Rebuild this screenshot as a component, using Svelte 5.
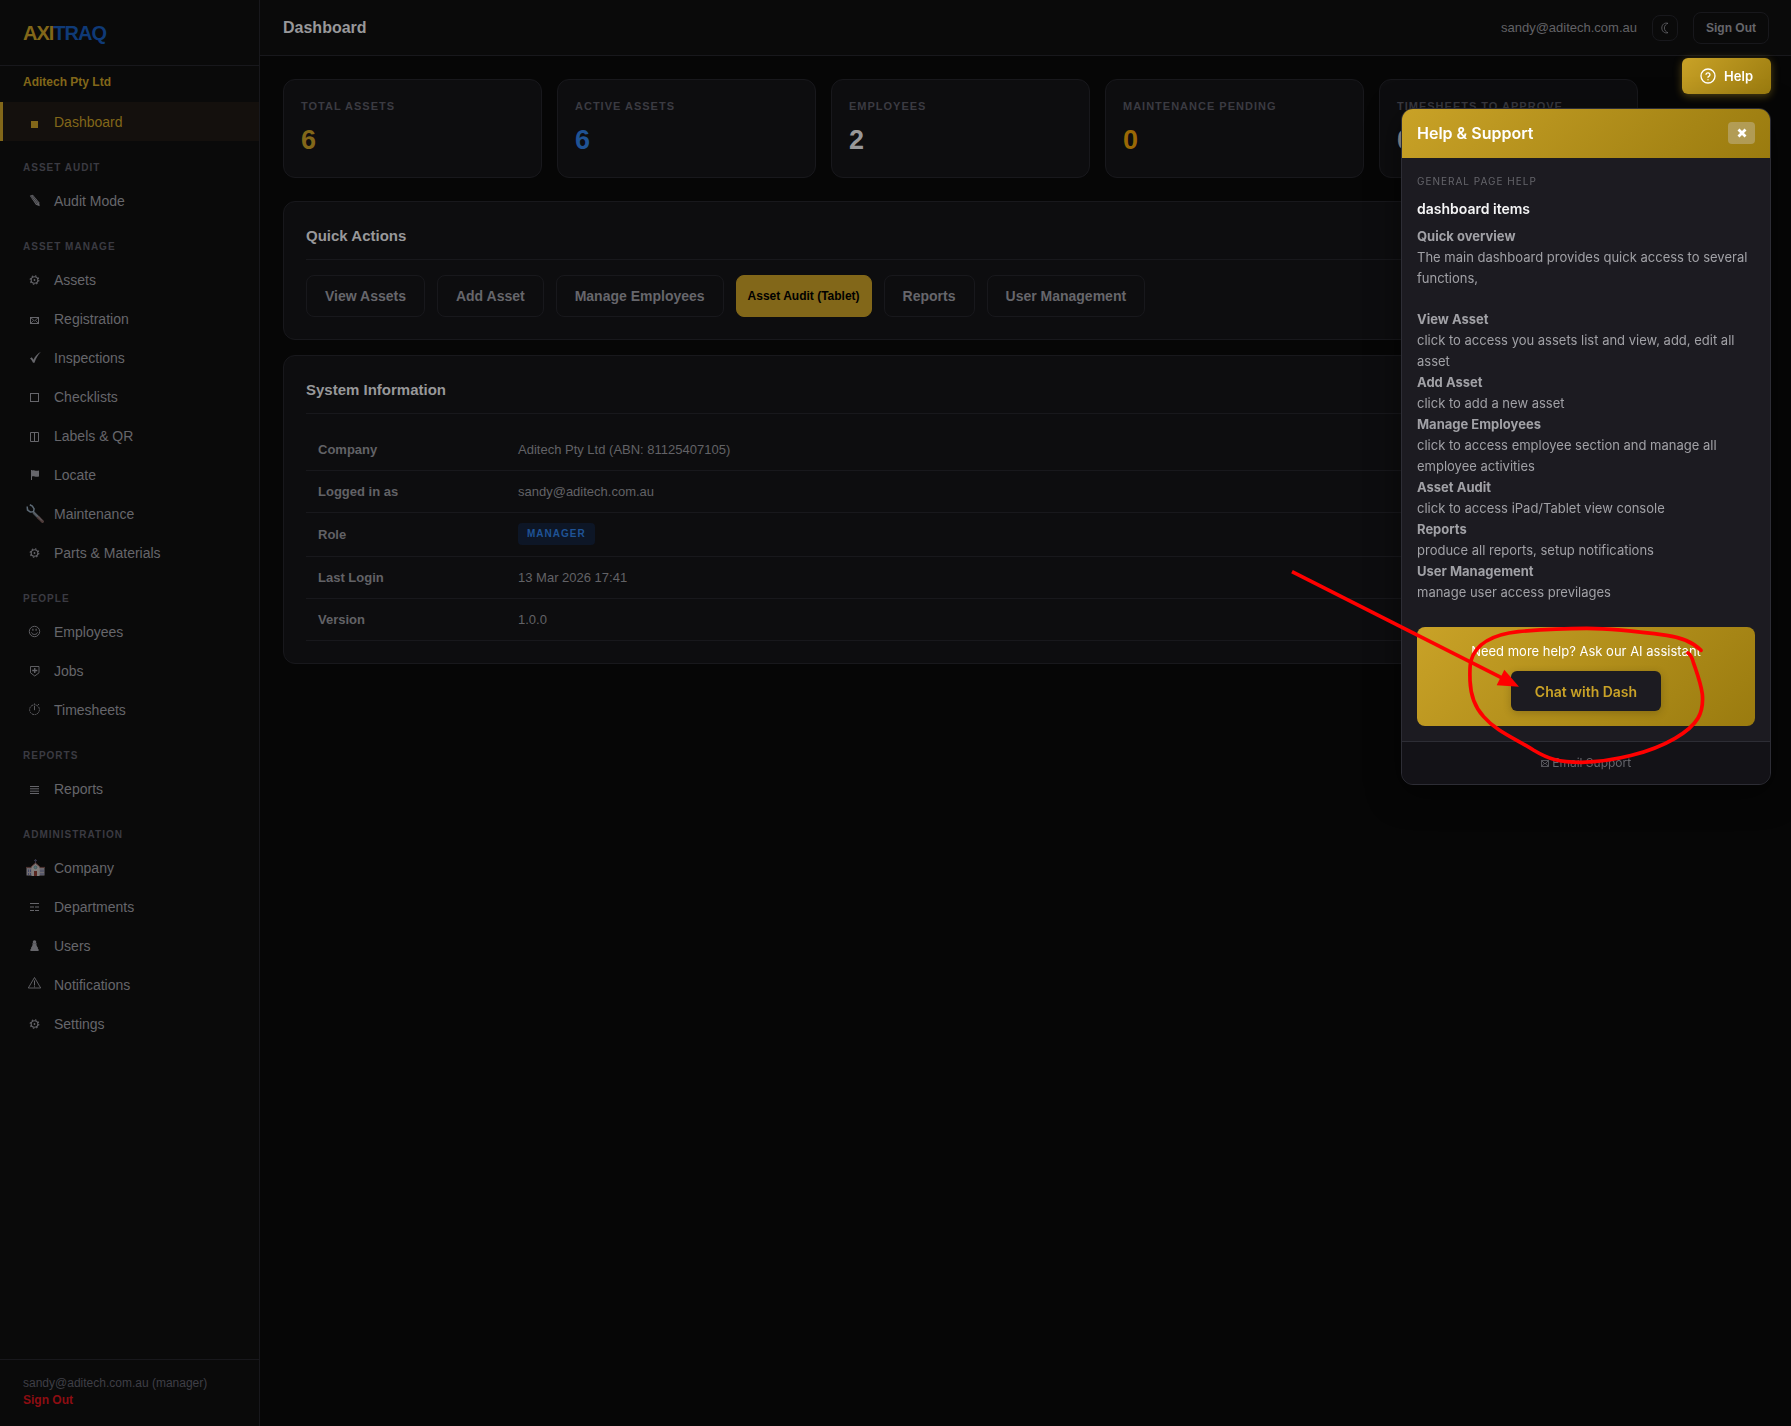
<script lang="ts">
  interface NavItem {
    label: string;
    icon: string;
    active?: boolean;
  }

  interface NavSection {
    title?: string;
    items: NavItem[];
  }

  const sections: NavSection[] = [
    { items: [{ label: "Dashboard", icon: "square", active: true }] },
    { title: "Asset Audit", items: [{ label: "Audit Mode", icon: "pencil" }] },
    {
      title: "Asset Manage",
      items: [
        { label: "Assets", icon: "gear" },
        { label: "Registration", icon: "mail" },
        { label: "Inspections", icon: "check" },
        { label: "Checklists", icon: "box" },
        { label: "Labels & QR", icon: "split" },
        { label: "Locate", icon: "flag" },
        { label: "Maintenance", icon: "wrench" },
        { label: "Parts & Materials", icon: "gear" },
      ],
    },
    {
      title: "People",
      items: [
        { label: "Employees", icon: "smile" },
        { label: "Jobs", icon: "shield" },
        { label: "Timesheets", icon: "clock" },
      ],
    },
    { title: "Reports", items: [{ label: "Reports", icon: "lines" }] },
    {
      title: "Administration",
      items: [
        { label: "Company", icon: "school" },
        { label: "Departments", icon: "trigram" },
        { label: "Users", icon: "pawn" },
        { label: "Notifications", icon: "warning" },
        { label: "Settings", icon: "gear" },
      ],
    },
  ];

  const stats = [
    { label: "Total Assets", value: 6, tone: "gold" },
    { label: "Active Assets", value: 6, tone: "blue" },
    { label: "Employees", value: 2, tone: "plain" },
    { label: "Maintenance Pending", value: 0, tone: "amber" },
    { label: "Timesheets to Approve", value: 0, tone: "plain" },
  ];

  const actions = [
    { label: "View Assets" },
    { label: "Add Asset" },
    { label: "Manage Employees" },
    { label: "Asset Audit (Tablet)", primary: true },
    { label: "Reports" },
    { label: "User Management" },
  ];

  const info = [
    { label: "Company", value: "Aditech Pty Ltd (ABN: 81125407105)" },
    { label: "Logged in as", value: "sandy@aditech.com.au" },
    { label: "Role", value: "Manager", badge: true },
    { label: "Last Login", value: "13 Mar 2026 17:41" },
    { label: "Version", value: "1.0.0" },
  ];

  const topics = [
    { title: "View Asset", text: "click to access you assets list and view, add, edit all asset" },
    { title: "Add Asset", text: "click to add a new asset" },
    { title: "Manage Employees", text: "click to access employee section and manage all employee activities" },
    { title: "Asset Audit", text: "click to access iPad/Tablet view console" },
    { title: "Reports", text: "produce all reports, setup notifications" },
    { title: "User Management", text: "manage user access previlages" },
  ];

  let helpOpen = $state(true);
</script>

{#snippet icon(name: string)}
  <svg class="icon" viewBox="0 0 20 19" width="20" height="19" fill="none" stroke="currentColor" aria-hidden="true">
    {#if name === "square"}
      <rect x="6" y="9" width="7" height="7" fill="currentColor" stroke="none" />
    {:else if name === "pencil"}
      <path d="M4.8 4.8l3-1 6.3 7.4.6 4-3.800-1.400z" fill="currentColor" stroke="none" />
      <path d="M6 5.200l6.200 8M7.400 4.600l6 7.600" stroke="#0a0a0a" stroke-width=".5" />
    {:else if name === "gear"}
      <circle cx="9.5" cy="10" r="3.3" stroke-width="1.1" />
      <circle cx="9.5" cy="10" r="4.300" stroke-width="1.1" stroke-dasharray="1.500 1.877" />
      <circle cx="9.5" cy="10" r=".9" fill="currentColor" stroke="none" />
    {:else if name === "mail"}
      <rect x="5.5" y="8.500" width="8" height="6" />
      <path d="M5.5 8.500l4 3.500 4-3.500M5.5 14.500l3-3M13.5 14.500l-3-3" stroke-width=".8" />
    {:else if name === "check"}
      <path d="M5 10.500l1.800-1.200 1.700 2.500C10 8.500 12.500 5.500 16 3.800c-3 3-5 6.500-6.500 11H8C7.200 12.800 6.200 11.200 5 10.500z" fill="currentColor" stroke="none" />
    {:else if name === "box"}
      <rect x="5.5" y="6.500" width="8" height="8" />
    {:else if name === "split"}
      <path d="M5.5 6.500h8v9h-8zM9.5 6.500v9" />
    {:else if name === "flag"}
      <path d="M6.5 5v10" />
      <path d="M7 5.500c2-1 3 1 7 0v6c-4 1-5-1-7 0z" fill="currentColor" stroke="none" />
    {:else if name === "wrench"}
      <path d="M8.500 8.500l6 6" stroke="#4c5258" stroke-width="2.600" />
      <path d="M2.200 2.500l.3 3.600 2.800 1.800 3.200-.2.600-2.800L7.300 2 4.800.8M2.200 4l.8 2.500" stroke="#5c6975" stroke-width="1.500" />
      <path d="M13.500 13.500l4 4" stroke="#4d3a38" stroke-width="3" stroke-linecap="round" />
      <path d="M7.500 7l9.500 9.500" stroke="#69727b" stroke-width=".8" />
    {:else if name === "smile"}
      <circle cx="9.500" cy="9.500" r="5.200" stroke-width=".9" />
      <path d="M6.500 10.500c.8 2.600 5.200 2.600 6 0" />
      <path d="M7.900 6.800v2M11.100 6.800v2" stroke-width="1.100" />
    {:else if name === "shield"}
      <path d="M5.500 5.500h8.500v6.300l-4.250 3.200-4.250-3.200z" stroke-width=".9" />
      <path d="M9.750 7v5M7.200 9.500h5.100" stroke-width="1.300" />
    {:else if name === "clock"}
      <circle cx="9.500" cy="9.700" r="4.900" stroke-width=".9" stroke-dasharray="2 .7" />
      <path d="M9.500 6v4.200M9.500 3.500v1M13 5l1-1" stroke-width=".9" />
    {:else if name === "lines"}
      <path d="M5 7.500h9M5 9.800h9M5 12.200h9M5 14.500h9" />
    {:else if name === "school"}
      <path d="M10.500 1v5M9 2.500h3" stroke="#303044" stroke-width="1.200" />
      <path d="M1.500 9.500h18v8h-18z" fill="#716d72" stroke="none" />
      <path d="M1 9.500h19" stroke="#4d3230" stroke-width="1.200" />
      <path d="M6.500 18V8.500l4-3.500 4 3.500V18z" fill="#817d7c" stroke="none" />
      <path d="M6.300 8.700l4.200-3.500 4.200 3.500" stroke="#5a3431" />
      <circle cx="10.500" cy="9.300" r="1.500" fill="#557276" stroke="#394c50" stroke-width=".6" />
      <path d="M9 13h3v5H9z" fill="#592721" stroke="none" />
      <path d="M3.500 11.500v2.500M5.500 11.500v2.500M16 11.500v2.500M18 11.500v2.500M3.500 15v2M5.500 15v2M16 15v2M18 15v2" stroke="#414765" />
    {:else if name === "trigram"}
      <path d="M5 6.500h9M5 10h4M10 10h4M5 13.500h4M10 13.500h4" stroke-width="1.200" />
    {:else if name === "pawn"}
      <circle cx="9.500" cy="6" r="1.800" fill="currentColor" stroke="none" />
      <path d="M7.200 7.300h4.600l-.4 1.500c.3 1.300.8 2 1.500 2.700v1.200l.7.600V15H5.400v-1.700l.7-.6v-1.200c.7-.7 1.200-1.400 1.500-2.700z" fill="currentColor" stroke="none" />
    {:else if name === "warning"}
      <path d="M9.500 2.500l6.200 10.500H3.300z" stroke-width=".9" />
      <path d="M9.500 5.500v5M9.500 11.300v1" />
    {/if}
  </svg>
{/snippet}

<div class="app">
  <aside class="sidebar">
    <div class="logo"><span>AXI</span>TRAQ</div>
    <div class="tenant">Aditech Pty Ltd</div>
    <nav>
      {#each sections as section}
        {#if section.title}
          <div class="nav-title">{section.title}</div>
        {/if}
        {#each section.items as item}
          <a class="nav-item" class:active={item.active} href="#{item.icon}">
            {@render icon(item.icon)}
            <span>{item.label}</span>
          </a>
        {/each}
      {/each}
    </nav>
    <div class="sidebar-footer">
      <div>sandy@aditech.com.au (manager)</div>
      <a href="#logout">Sign Out</a>
    </div>
  </aside>

  <div class="main">
    <header class="topbar">
      <h1>Dashboard</h1>
      <div class="topbar-right">
        <span class="email">sandy@aditech.com.au</span>
        <button class="theme-btn" aria-label="Toggle theme">
          <svg viewBox="0 0 12 14" width="12" height="14" fill="none" stroke="currentColor">
            <path d="M9 2.300C5.300 1.300 2.800 3.700 2.800 7s2.700 5.700 6.200 4.700C6.800 11 5.400 9.200 5.400 7S6.800 3 9 2.300z" stroke-width=".8" />
          </svg>
        </button>
        <button class="signout-btn">Sign Out</button>
      </div>
    </header>

    <main class="content">
      <div class="stats">
        {#each stats as stat}
          <div class="stat">
            <div class="stat-label">{stat.label}</div>
            <div class="stat-value {stat.tone}">{stat.value}</div>
          </div>
        {/each}
      </div>

      <section class="card">
        <h2>Quick Actions</h2>
        <div class="actions">
          {#each actions as action}
            <button class="action" class:primary={action.primary}>{action.label}</button>
          {/each}
        </div>
      </section>

      <section class="card">
        <h2>System Information</h2>
        <table>
          <tbody>
            {#each info as row}
              <tr>
                <th scope="row">{row.label}</th>
                <td>
                  {#if row.badge}
                    <span class="badge">{row.value}</span>
                  {:else}
                    {row.value}
                  {/if}
                </td>
              </tr>
            {/each}
          </tbody>
        </table>
      </section>
    </main>
  </div>
</div>

<div class="help">
  <button class="help-btn" onclick={() => (helpOpen = !helpOpen)}>
    <svg viewBox="0 0 24 24" width="16" height="16" fill="none" stroke="currentColor" stroke-width="2" stroke-linecap="round">
      <circle cx="12" cy="12" r="10.500" />
      <path d="M9 9.300a3.100 3.100 0 0 1 6 1c0 2-3 2.300-3 3.700M12 17.500v.1" />
    </svg>
    Help
  </button>

  {#if helpOpen}
    <div class="popup" role="dialog" aria-label="Help & Support">
      <div class="popup-header">
        <h3>Help &amp; Support</h3>
        <button class="close-btn" aria-label="Close" onclick={() => (helpOpen = false)}>
          <svg viewBox="0 0 10 10" width="10" height="10" stroke="currentColor" stroke-width="2.800">
            <path d="M1.500 1.500l7 7M8.500 1.500l-7 7" />
          </svg>
        </button>
      </div>
      <div class="popup-body">
        <div class="eyebrow">General page help</div>
        <h4>dashboard items</h4>
        <div class="help-text">
          <strong>Quick overview</strong>
          <p class="intro">The main dashboard provides quick access to several functions,</p>
          {#each topics as topic}
            <strong>{topic.title}</strong>
            <p>{topic.text}</p>
          {/each}
        </div>
        <div class="assistant">
          <p>Need more help? Ask our AI assistant</p>
          <button class="chat-btn">Chat with Dash</button>
        </div>
      </div>
      <div class="popup-footer">
        <a href="#email">
          <svg viewBox="0 0 8 7" width="8" height="7" fill="none" stroke="currentColor" stroke-width=".8">
            <path d="M.5.5h7v6h-7zM.5.5L4 4 7.500.5M.5 6.500l2.700-3M7.500 6.500l-2.700-3" />
          </svg>
          Email Support
        </a>
      </div>
    </div>

    <!-- arrow and circle pointing out the chat button -->
    <svg class="marker" viewBox="0 0 1563 780" width="521" height="260" fill="none" stroke="#ff0000" stroke-width="11" aria-hidden="true">
      <path d="M66 68L700 389" />
      <path d="M747 413l-67-4 23-47z" fill="#ff0000" stroke="none" />
      <path
        d="M1293 304C1270 280 1235 265 1190 259C1110 248 1030 238 950 238C880 238 810 242 745 248C670 256 617 285 603 335C598 355 600 375 600 395C602 440 615 475 640 502C680 548 735 568 790 603C835 630 865 640 935 640C1030 638 1140 612 1215 568C1285 528 1302 490 1297 435C1292 400 1280 370 1270 340Q1264 318 1254 312"
        stroke-linecap="round"
      />
    </svg>
  {/if}
</div>

<style>
  :global(body) {
    background: #060606;
    color: #98989a;
    font-family: "Liberation Sans", Helvetica, Arial, sans-serif;
  }

  * {
    box-sizing: border-box;
  }

  h1,
  h2,
  h3,
  h4,
  p {
    margin: 0;
  }

  button {
    font-family: inherit;
    cursor: pointer;
  }

  a {
    text-decoration: none;
  }

  .app {
    display: flex;
    min-height: 100vh;
  }

  /* Sidebar */
  .sidebar {
    width: 260px;
    flex-shrink: 0;
    display: flex;
    flex-direction: column;
    background: #0a0a0a;
    border-right: 1px solid #18181c;
  }

  .logo {
    padding: 21px 23px 20px;
    border-bottom: 1px solid #18181c;
    font-size: 20px;
    line-height: 24px;
    font-weight: 700;
    letter-spacing: -1px;
    color: #0f3a77;
  }

  .logo span {
    color: #826719;
  }

  .tenant {
    padding: 8px 23px 12px;
    font-size: 12px;
    line-height: 16px;
    font-weight: 700;
    color: #826719;
  }

  nav {
    flex: 1;
  }

  .nav-title {
    padding: 20px 23px 6px;
    font-size: 10px;
    line-height: 14px;
    font-weight: 700;
    letter-spacing: 1px;
    text-transform: uppercase;
    color: #3b3b42;
  }

  .nav-item {
    display: flex;
    align-items: center;
    gap: 9px;
    height: 39px;
    padding-left: 22px;
    border-left: 3px solid transparent;
    font-size: 14px;
    color: #66666b;
  }

  .nav-item.active {
    background: #14100d;
    border-left-color: #826719;
    color: #826719;
  }

  .icon {
    flex-shrink: 0;
  }

  .sidebar-footer {
    padding: 15px 23px 17px;
    border-top: 1px solid #18181c;
    font-size: 12px;
    line-height: 17px;
    color: #3f3f46;
  }

  .sidebar-footer a {
    font-weight: 700;
    color: #8d0d12;
  }

  /* Top bar */
  .main {
    flex: 1;
    min-width: 0;
  }

  .topbar {
    display: flex;
    align-items: center;
    justify-content: space-between;
    height: 56px;
    padding: 0 22px 0 23px;
    background: #0a0a0a;
    border-bottom: 1px solid #18181c;
  }

  .topbar h1 {
    font-size: 16px;
    font-weight: 700;
  }

  .topbar-right {
    display: flex;
    align-items: center;
    gap: 15px;
  }

  .email {
    font-size: 13px;
    color: #626266;
  }

  .theme-btn,
  .signout-btn,
  .action {
    background: transparent;
    border: 1px solid #18181c;
    border-radius: 8px;
    color: #66666b;
  }

  .theme-btn {
    display: flex;
    align-items: center;
    justify-content: center;
    width: 26px;
    height: 26px;
    padding: 0;
  }

  .signout-btn {
    height: 32px;
    padding: 0 12px;
    font-size: 12px;
    font-weight: 700;
  }

  /* Content */
  .content {
    display: flex;
    flex-direction: column;
    gap: 15px;
    max-width: 1401px;
    padding: 23px;
  }

  .stats {
    display: grid;
    grid-template-columns: repeat(5, 1fr);
    gap: 15px;
    margin-bottom: 8px;
  }

  .stat,
  .card {
    background: #0d0d0f;
    border: 1px solid #18181c;
    border-radius: 12px;
  }

  .stat {
    height: 99px;
    padding: 18px 17px;
  }

  .stat-label {
    font-size: 11px;
    line-height: 16px;
    font-weight: 700;
    letter-spacing: 1px;
    text-transform: uppercase;
    color: #3b3b42;
  }

  .stat-value {
    margin-top: 8px;
    font-size: 27px;
    line-height: 36px;
    font-weight: 700;
    color: #98989a;
  }

  .stat-value.gold {
    color: #826719;
  }

  .stat-value.blue {
    color: #1f5395;
  }

  .stat-value.amber {
    color: #9a6805;
  }

  .card {
    padding: 22px;
  }

  .card h2 {
    padding: 2px 0 13px;
    margin-bottom: 15px;
    border-bottom: 1px solid #18181c;
    font-size: 15px;
    line-height: 20px;
    font-weight: 700;
  }

  .actions {
    display: flex;
    flex-wrap: wrap;
    gap: 12px;
  }

  .action {
    height: 42px;
    padding: 0 18px;
    font-size: 14px;
    font-weight: 700;
  }

  .action.primary {
    padding: 0 11px;
    background: #826719;
    border-color: #826719;
    font-size: 12px;
    color: #000000;
  }

  table {
    width: 100%;
    border-spacing: 0;
    font-size: 13px;
    line-height: 20px;
    color: #626266;
  }

  th,
  td {
    height: 42px;
    padding: 0 12px;
    border-bottom: 1px solid #18181c;
    text-align: left;
  }

  th {
    width: 200px;
    font-weight: 700;
  }

  .badge {
    display: inline-block;
    margin: 10px 0 11px;
    padding: 0 9px;
    border-radius: 4px;
    background: #0d1626;
    color: #1f5395;
    font-size: 10px;
    line-height: 22px;
    font-weight: 700;
    letter-spacing: 1px;
    text-transform: uppercase;
    vertical-align: middle;
  }

  /* Help popup */
  .help {
    position: fixed;
    top: 58px;
    right: 20px;
    display: flex;
    flex-direction: column;
    align-items: flex-end;
    gap: 14px;
    font-family: Inter, sans-serif;
    font-size: 13px;
  }

  .help-btn {
    display: flex;
    align-items: center;
    gap: 8px;
    height: 36px;
    padding: 0 18px;
    border: none;
    border-radius: 6px;
    background: linear-gradient(135deg, #c9a227, #9a7b0f);
    box-shadow: 0 2px 8px rgba(201, 162, 39, 0.4);
    color: #ffffff;
    font-size: 13px;
    font-weight: 600;
  }

  .popup {
    width: 370px;
    overflow: hidden;
    background: #1c1b21;
    border: 1px solid #2d2d35;
    border-radius: 12px;
    box-shadow: 0 8px 32px rgba(0, 0, 0, 0.5);
  }

  .popup-header {
    display: flex;
    align-items: center;
    justify-content: space-between;
    height: 49px;
    padding: 0 15px 2px;
    background: linear-gradient(135deg, #c9a227, #9a7b0f);
    color: #ffffff;
  }

  .popup-header h3 {
    font-size: 16px;
    font-weight: 600;
  }

  .close-btn {
    display: flex;
    align-items: center;
    justify-content: center;
    width: 27px;
    height: 22px;
    padding: 0;
    border: none;
    border-radius: 4px;
    background: rgba(196, 184, 152, 0.5);
    color: #ffffff;
  }

  .popup-body {
    padding: 15px;
  }

  .eyebrow {
    font-size: 10px;
    line-height: 16px;
    letter-spacing: 1px;
    text-transform: uppercase;
    color: #65656b;
  }

  h4 {
    margin: 10px 0 7px;
    font-size: 14px;
    line-height: 20px;
    font-weight: 600;
    color: #f4f4f5;
  }

  .help-text {
    line-height: 21px;
    color: #a1a1a6;
  }

  .help-text strong {
    font-weight: 700;
  }

  .intro {
    margin-bottom: 20px;
  }

  .assistant {
    margin-top: 24px;
    padding: 15px;
    border-radius: 8px;
    background: linear-gradient(135deg, #c9a227, #9a7b0f);
    text-align: center;
    color: #ffffff;
  }

  .assistant p {
    margin-bottom: 10px;
    line-height: 19px;
  }

  .chat-btn {
    height: 40px;
    padding: 0 24px;
    border: none;
    border-radius: 6px;
    background: #1c1b21;
    box-shadow: 0 2px 8px rgba(0, 0, 0, 0.2);
    color: #c9a227;
    font-size: 14px;
    font-weight: 600;
  }

  .popup-footer {
    padding: 12px;
    border-top: 1px solid #2d2d35;
    background: #131217;
    font-size: 12px;
    line-height: 18px;
    text-align: center;
  }

  .popup-footer a {
    color: #65656b;
  }

  .marker {
    position: absolute;
    top: 491px;
    right: -20px;
    pointer-events: none;
  }
</style>
